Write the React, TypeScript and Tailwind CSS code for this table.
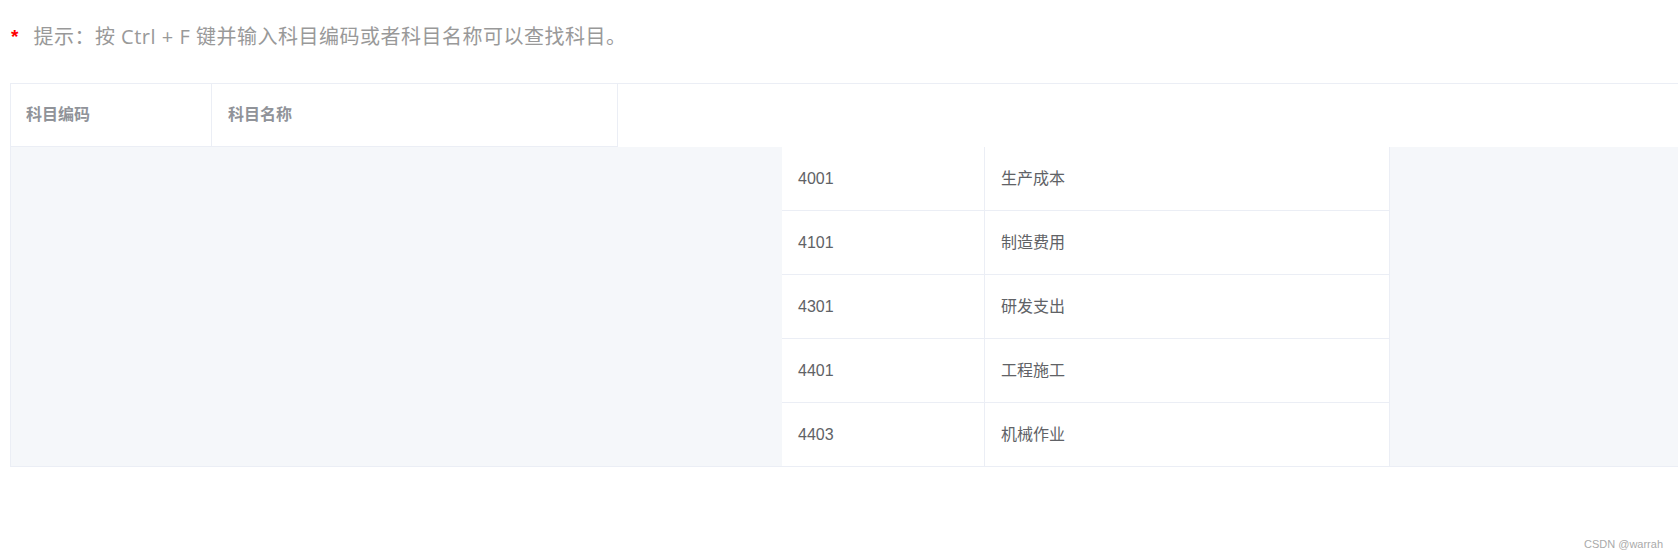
const rows = [
  { code: "4001", name: "生产成本" },
  { code: "4101", name: "制造费用" },
  { code: "4301", name: "研发支出" },
  { code: "4401", name: "工程施工" },
  { code: "4403", name: "机械作业" },
];

const tableFont = {
  fontFamily: '"Liberation Sans", "Noto Sans CJK SC", sans-serif',
};

export default function App() {
  return (
    <div
      className="relative h-[558px] w-full overflow-hidden bg-white"
      style={tableFont}
    >
      {/* hint */}
      <div className="mt-[23px] flex h-[28px] items-center pl-[11px] leading-[28px]">
        <span
          className="mr-[15px] text-[19px] font-bold text-[#ff0000]"
          style={{ fontFamily: '"Liberation Sans", sans-serif' }}
        >
          *
        </span>
        <span
          className="text-[20px] tracking-[0.5px] text-[#999999]"
          style={{ fontFamily: '"Open Sans", "Noto Sans CJK SC", sans-serif' }}
        >
          提示：按 Ctrl + F 键并输入科目编码或者科目名称可以查找科目。
        </span>
      </div>

      {/* table */}
      <div className="ml-[10px] mt-[32px] border-l border-t border-[#ebeef5]">
        <div className="flex h-[63px]">
          <div className="flex w-[201px] items-center border-b border-r border-[#ebeef5] pl-[15px] text-[16px] font-bold text-[#909399]">
            科目编码
          </div>
          <div className="flex w-[406px] items-center border-b border-r border-[#ebeef5] pl-4 text-[16px] font-bold text-[#909399]">
            科目名称
          </div>
        </div>

        <div className="flex border-b border-[#ebeef5] bg-[#f5f7fa]">
          <div className="w-[771px] shrink-0" />
          <div className="flex flex-col bg-white">
            {rows.map((r, i) => (
              <div
                key={r.code}
                className={[
                  "flex",
                  i < rows.length - 1
                    ? "h-[64px] border-b border-[#ebeef5]"
                    : "h-[63px]",
                ].join(" ")}
              >
                <div className="flex w-[203px] items-center border-r border-[#ebeef5] pl-4 text-[16px] text-[#606266]">
                  {r.code}
                </div>
                <div className="flex w-[405px] items-center border-r border-[#ebeef5] pl-4 text-[16px] text-[#606266]">
                  {r.name}
                </div>
              </div>
            ))}
          </div>
        </div>
      </div>

      <div
        className="absolute bottom-[7px] right-[15px] text-[11px] leading-[14px] text-[#aaaaaa]"
        style={{ fontFamily: '"Liberation Sans", sans-serif' }}
      >
        CSDN @warrah
      </div>
    </div>
  );
}
